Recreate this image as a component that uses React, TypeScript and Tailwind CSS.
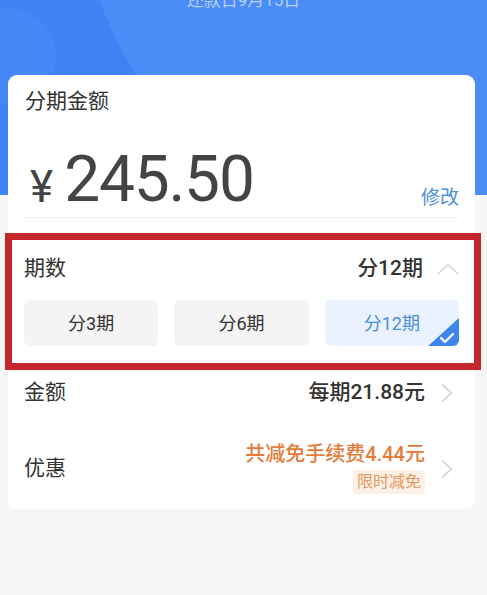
import { ReactNode } from "react";

const FONT = "font-['Roboto','Noto_Sans_CJK_SC',sans-serif]";

function ChevronRight() {
  return (
    <svg width="12" height="20" viewBox="0 0 12 20" className="ml-4" aria-hidden="true">
      <polyline points="1.5,2 10.5,10 1.5,18" fill="none" stroke="#cfcfcf" strokeWidth="1.6" strokeLinecap="round" strokeLinejoin="round" />
    </svg>
  );
}

function ChevronUp() {
  return (
    <svg width="22" height="12" viewBox="0 0 22 12" className="ml-[14px]" aria-hidden="true">
      <polyline points="1.5,10.5 11,1.5 20.5,10.5" fill="none" stroke="#d2d2d2" strokeWidth="1.5" strokeLinecap="round" strokeLinejoin="round" />
    </svg>
  );
}

function PeriodButton({ label, active }: { label: string; active?: boolean }) {
  return (
    <div
      className={`relative flex h-[46px] items-center justify-center overflow-hidden rounded-[6px] text-[18px] ${
        active ? "bg-[#e9f2fe] text-[#4a8fdc]" : "bg-[#f4f4f4] text-[#333]"
      }`}
    >
      {label}
      {active ? (
        <svg width="31" height="28" viewBox="0 0 31 28" className="absolute bottom-0 right-0" aria-hidden="true">
          <polygon points="31,0 31,28 0,28" fill="#3d86ee" />
          <polyline points="13,20 17,24 25,16" fill="none" stroke="#fff" strokeWidth="2.4" strokeLinecap="round" strokeLinejoin="round" />
        </svg>
      ) : null}
    </div>
  );
}

function Row({ label, children, className }: { label: string; children: ReactNode; className: string }) {
  return (
    <div className={`flex items-center justify-between pl-4 ${className}`}>
      <span className="text-[21px] text-[#333]">{label}</span>
      <div className="flex items-center">{children}</div>
    </div>
  );
}

export default function App() {
  return (
    <div className={`min-h-[595px] w-[487px] overflow-hidden bg-[#f6f6f6] ${FONT}`}>
      <header className="relative h-[195px] overflow-hidden bg-[#3e82f3]">
        <div className="absolute left-[72px] top-[-578px] h-[856px] w-[856px] rounded-full bg-[#4a8df6]" />
        <div className="absolute left-[-40px] top-[8px] h-[96px] w-[96px] rounded-full bg-[#4588f5]" />
        <p className="relative -mt-[12px] text-center text-[17px] text-white/60">还款日9月15日</p>
      </header>

      <section className="relative -mt-[120px] ml-2 w-[467px] rounded-[9px] bg-white">
        <div className="flex h-[54px] items-center px-[17px] text-[21px] text-[#333]">分期金额</div>

        <div className="flex h-[88px] items-end justify-between px-4 pb-[5px]">
          <div className="flex items-end text-[#444]">
            <span className="mb-[3px] ml-[6px] text-[44px] leading-none">¥</span>
            <span className="ml-[11px] text-[64px] leading-none tracking-[-1.2px]">245.50</span>
          </div>
          <span className="text-[19px] text-[#4a8fdc]">修改</span>
        </div>
        <div className="mx-4 border-b border-[#efefef]" />

        <div className="relative pb-[14px] pt-[27px]">
          <div className="pointer-events-none absolute bottom-[-10px] left-[-3px] right-[-6px] top-[15px] border-[7px] border-[#c4262b]" />
          <Row label="期数" className="h-[48px] pr-4">
            <span className="text-[21px] font-medium text-[#333]">分12期</span>
            <ChevronUp />
          </Row>
          <div className="mt-[7px] grid grid-cols-3 gap-4 px-4">
            <PeriodButton label="分3期" />
            <PeriodButton label="分6期" />
            <PeriodButton label="分12期" active />
          </div>
        </div>

        <Row label="金额" className="h-[66px] pr-[22px]">
          <span className="text-[21px] font-medium text-[#333]">每期21.88元</span>
          <ChevronRight />
        </Row>

        <Row label="优惠" className="h-[83px] pr-[22px] pt-[3px]">
          <div className="mb-[5px] flex flex-col items-end">
            <span className="text-[20px] font-medium leading-[28px] text-[#e47b3a]">共减免手续费4.44元</span>
            <span className="mt-[2px] rounded-[3px] bg-[#fdf1e7] px-[4px] text-[16px] leading-[24px] text-[#e6975f]">限时减免</span>
          </div>
          <ChevronRight />
        </Row>
      </section>
    </div>
  );
}
